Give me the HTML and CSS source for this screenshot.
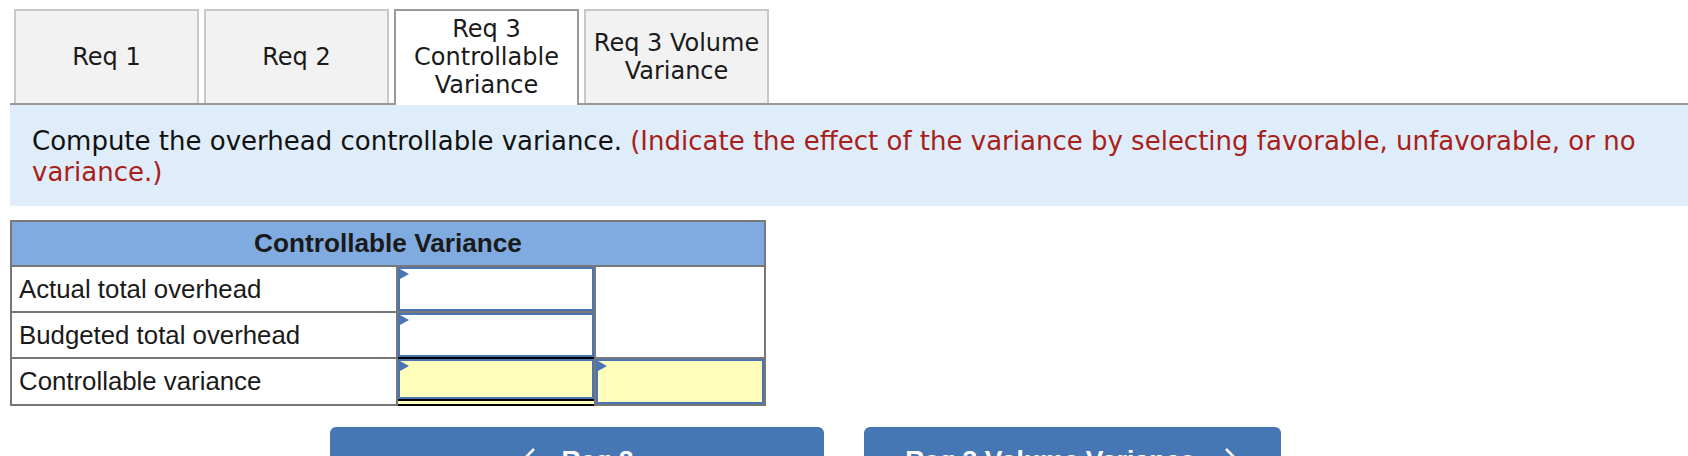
FILE: index.html
```html
<!DOCTYPE html>
<html>
<head>
<meta charset="utf-8">
<link rel="stylesheet" href="styles.css">
</head>
<body>
<div class="page">
  <div class="tabs">
    <div class="tab">Req 1</div>
    <div class="tab">Req 2</div>
    <div class="tab active">Req 3<br>Controllable<br>Variance</div>
    <div class="tab">Req 3 Volume<br>Variance</div>
  </div>
  <div class="panel">
    <p class="instr">Compute the overhead controllable variance. <span class="red">(Indicate the effect of the variance by selecting favorable, unfavorable, or no variance.)</span></p>
  </div>
  <div class="sheet">
    <div class="hd">Controllable Variance</div>
    <div class="lbl">Actual total overhead</div>
    <div class="cell"><div class="box"></div></div>
    <div class="blank"></div>
    <div class="lbl">Budgeted total overhead</div>
    <div class="cell sub"><div class="box"></div></div>
    <div class="lbl">Controllable variance</div>
    <div class="cell total"><div class="box yellow"></div><div class="dbl"></div></div>
    <div class="cell yellow"><div class="box yellow"></div></div>
  </div>
  <div class="nav">
    <div class="btn prev"><svg class="chev" width="16" height="26" viewBox="0 0 16 26"><polyline points="14,1 2,13 14,25" fill="none" stroke="#fff" stroke-width="2.5"/></svg><span>Req 2</span></div>
    <div class="btn next"><span>Req 3 Volume Variance</span><svg class="chev" width="16" height="26" viewBox="0 0 16 26"><polyline points="2,1 14,13 2,25" fill="none" stroke="#fff" stroke-width="2.5"/></svg></div>
  </div>
</div>
</body>
</html>
```

FILE: styles.css
```css
html, body {
  margin: 0;
  padding: 0;
  background: #ffffff;
  overflow: hidden;
}
.page {
  padding-left: 10px;
}
.tabs {
  display: flex;
  gap: 5px;
  height: 94px;
  padding: 9px 0 0 4px;
  border-bottom: 2px solid #999999;
  align-items: flex-start;
}
.tab {
  width: 185px;
  height: 94px;
  box-sizing: border-box;
  border: 2px solid #c8c8c8;
  border-bottom: none;
  background: #f2f2f2;
  display: flex;
  align-items: center;
  justify-content: center;
  text-align: center;
  font-family: "DejaVu Sans", Verdana, sans-serif;
  font-size: 24px;
  line-height: 28px;
  color: #1a1a1a;
}
.tab.active {
  height: 96px;
  background: #ffffff;
  border-color: #9a9a9a;
  padding-bottom: 2px;
}
.panel {
  background: #deedf9;
  padding: 21px 10px 18px 22px;
}
.instr {
  margin: 0;
  font-family: "DejaVu Sans", Verdana, sans-serif;
  font-size: 26px;
  line-height: 31px;
  color: #111111;
}
.red {
  color: #a8201a;
}
.sheet {
  margin-top: 14px;
  width: 756px;
  box-sizing: border-box;
  border: 2px solid #777777;
  background: #777777;
  display: grid;
  grid-template-columns: 384px 196px 168px;
  grid-template-rows: 43px 44px 44px 45px;
  gap: 2px;
  font-family: "Liberation Sans", Arial, sans-serif;
}
.hd {
  grid-column: 1 / 4;
  background: #80abe0;
  display: flex;
  align-items: center;
  justify-content: center;
  font-weight: bold;
  font-size: 26.2px;
  color: #1a1a1a;
}
.lbl {
  background: #ffffff;
  display: flex;
  align-items: center;
  padding-left: 7px;
  font-size: 25.8px;
  color: #1a1a1a;
}
.blank {
  grid-column: 3;
  grid-row: 2 / 4;
  background: #ffffff;
}
.cell {
  background: #ffffff;
  display: flex;
  flex-direction: column;
}
.cell.yellow {
  background: #ffffbb;
}
.box {
  flex: 1;
  box-sizing: border-box;
  border: 2px solid #4a74b4;
  background: #ffffff;
  position: relative;
}
.box.yellow {
  background: #ffffbb;
}
.box::before {
  content: "";
  position: absolute;
  left: 0;
  top: 0;
  border-left: 9px solid #4a74b4;
  border-top: 5px solid transparent;
  border-bottom: 5px solid transparent;
}
.cell.sub {
  box-shadow: 0 2px 0 #000000;
}
.cell.total {
  background: #ffffbb;
  box-shadow: 0 2px 0 #000000;
}
.cell.total .box {
  flex: 0 0 40px;
}
.dbl {
  flex: 1;
  border-top: 2px solid #000000;
  background: #ffffbb;
}
.nav {
  display: flex;
  gap: 40px;
  margin-top: 21px;
  padding-left: 320px;
}
.btn {
  height: 70px;
  box-sizing: border-box;
  background: #4677b5;
  border-radius: 6px;
  display: flex;
  justify-content: center;
  align-items: flex-start;
  padding-top: 19px;
  color: #ffffff;
  font-family: "Liberation Sans", Arial, sans-serif;
  font-weight: bold;
  font-size: 26.5px;
  line-height: 28px;
}
.btn.prev {
  width: 494px;
}
.btn.next {
  width: 417px;
}
.prev .chev {
  margin-right: 25px;
  margin-top: 2px;
}
.next .chev {
  margin-left: 29px;
  margin-top: 2px;
}
```
